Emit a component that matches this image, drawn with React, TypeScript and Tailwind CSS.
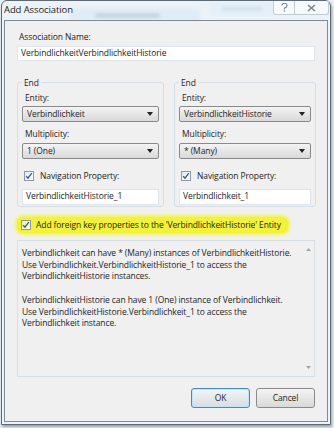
import { ReactNode } from "react";

const font = "font-['Segoe_UI','Open_Sans',sans-serif] tracking-[-0.1px]";

const Select = ({ value }: { value: string }) => (
  <div className="flex h-[16px] items-center justify-between rounded-[2px] border border-[#8a8a8a] bg-gradient-to-b from-[#f4f4f4] to-[#d9d9d9] pl-[4px] pr-[5px] text-[8.5px] text-[#1e1e1e]">
    <span>{value}</span>
    <svg width="6" height="4" viewBox="0 0 6 4">
      <path d="M0 0h6L3 4z" fill="#222" />
    </svg>
  </div>
);

const Check = ({ className = "" }: { className?: string }) => (
  <span
    className={`flex h-[10px] w-[10px] shrink-0 items-center justify-center border border-[#8e9aa8] bg-gradient-to-br from-[#e6e9ee] to-white ${className}`}
  >
    <svg width="8" height="8" viewBox="0 0 8 8">
      <path d="M1.2 4.2l1.8 2L6.8 1.2" fill="none" stroke="#3b5694" strokeWidth="1.3" />
    </svg>
  </span>
);

const TextBox = ({ value, className = "" }: { value: string; className?: string }) => (
  <div
    className={`flex h-[15px] items-center border border-[#dfe5ea] bg-white px-[3px] text-[8.5px] text-[#1e1e1e] ${className}`}
  >
    {value}
  </div>
);

const Label = ({ children }: { children: ReactNode }) => (
  <div className="pl-[3px] text-[8.5px] leading-[11px] text-[#1e1e1e]">{children}</div>
);

const EndGroup = ({ entity, mult, nav }: { entity: string; mult: string; nav: string }) => (
  <div className="relative flex h-[125px] flex-col rounded-[3px] border border-[#d5dfe5] px-[4px] pt-[9px]">
    <span className="absolute left-[4px] top-[-6px] bg-[#f0f0f0] px-[2px] text-[8.5px] leading-[11px] text-[#1e1e1e]">
      End
    </span>
    <Label>Entity:</Label>
    <div className="mt-[3px]">
      <Select value={entity} />
    </div>
    <div className="mt-[6px]">
      <Label>Multiplicity:</Label>
    </div>
    <div className="mt-[4px]">
      <Select value={mult} />
    </div>
    <div className="mt-[11px] flex items-center gap-[6px] pl-[2px] text-[8.5px] text-[#1e1e1e]">
      <Check />
      <span>Navigation Property:</span>
    </div>
    <div className="mt-[6px]">
      <TextBox value={nav} className="h-[16px]" />
    </div>
  </div>
);

export default function App() {
  return (
    <div className={`relative h-[428px] w-[334px] overflow-hidden bg-[#e9f2f8] ${font}`}>
      {/* blurred background stuff seen through the glass frame */}
      <div className="absolute left-[70px] top-[8px] h-[14px] w-[130px] rounded-[4px] bg-[#b9d9ee] opacity-70 blur-[2px]" />
      <div className="absolute left-[95px] top-[13px] h-[5px] w-[65px] rounded bg-[#6f8494] opacity-60 blur-[1.5px]" />
      <div className="absolute left-[210px] top-[2px] h-[14px] w-[64px] rounded-[3px] bg-[#cfe6f6] opacity-80 blur-[1px]" />
      <div className="absolute left-[222px] top-[7px] h-[4px] w-[40px] bg-[#8aa6ba] opacity-50 blur-[1.5px]" />

      <div className="relative ml-[1px] flex h-[425px] w-[330px] flex-col rounded-t-[6px] border border-[#5d6a76] bg-[#eef3f8]/60 shadow-[1px_2px_3px_rgba(0,0,0,0.35)]">
        {/* title bar */}
        <div className="flex h-[19px] items-start justify-between">
          <span className="pl-[2px] pt-[3px] text-[9.5px] leading-[12px] text-[#1b1b1b]">Add Association</span>
          <div className="mr-[1px] flex">
            <div className="flex h-[14px] w-[22px] items-center justify-center rounded-bl-[3px] border border-t-0 border-[#c3cbd3] bg-white/60">
              <svg width="7" height="9" viewBox="0 0 7 9">
                <path d="M1 2.5a2.5 2.2 0 1 1 3.2 2.1c-.6.3-.8.6-.8 1.3v.6" fill="none" stroke="#7b8591" strokeWidth="1.1" />
                <rect x="2.8" y="7.4" width="1.3" height="1.3" fill="#7b8591" />
              </svg>
            </div>
            <div className="flex h-[14px] w-[34px] items-center justify-center rounded-br-[3px] border border-l-0 border-t-0 border-[#c3cbd3] bg-white/60">
              <svg width="9" height="8" viewBox="0 0 9 8">
                <path d="M1 1l7 6M8 1L1 7" stroke="#7b8591" strokeWidth="1.6" />
              </svg>
            </div>
          </div>
        </div>

        {/* client area */}
        <div className="mx-[2px] mb-[2px] flex flex-1 flex-col border border-[#7f8b97] bg-[#f0f0f0] px-[12px] pt-[10px]">
          <div className="pl-[2px] text-[8.5px] leading-[11px] text-[#1e1e1e]">Association Name:</div>
          <TextBox value="VerbindlichkeitVerbindlichkeitHistorie" className="mt-[4px] border-[#c5d9ea]" />

          <div className="mt-[21px] grid grid-cols-[147px_142px] gap-[10px]">
            <EndGroup entity="Verbindlichkeit" mult="1 (One)" nav="VerbindlichkeitHistorie_1" />
            <EndGroup entity="VerbindlichkeitHistorie" mult="* (Many)" nav="Verbindlichkeit_1" />
          </div>

          <div className="mt-[10px] flex h-[16px] w-[271px] items-center gap-[5px] rounded-[6px] bg-[#f2f237] pl-[4px] text-[8.5px] text-[#1e1e1e] shadow-[0_0_3px_2px_#f4f45a]">
            <Check className="border-[#8a8f5e] from-[#eef08a] to-[#f6f78f]" />
            <span>Add foreign key properties to the 'VerbindlichkeitHistorie' Entity</span>
          </div>

          <div className="mt-[7px] flex h-[137px] border border-[#d5dfe5] bg-[#f0f0f0]">
            <div className="flex-1 whitespace-nowrap pl-[4px] pt-[6px] text-[8.5px] leading-[11.7px] text-[#1e1e1e]">
              <p>Verbindlichkeit can have * (Many) instances of VerbindlichkeitHistorie.</p>
              <p>Use Verbindlichkeit.VerbindlichkeitHistorie_1 to access the</p>
              <p>VerbindlichkeitHistorie instances.</p>
              <p className="mt-[11.7px]">VerbindlichkeitHistorie can have 1 (One) instance of Verbindlichkeit.</p>
              <p>Use VerbindlichkeitHistorie.Verbindlichkeit_1 to access the</p>
              <p>Verbindlichkeit instance.</p>
            </div>
            <div className="flex w-[12px] flex-col items-center justify-between py-[7px]">
              <svg width="5" height="3" viewBox="0 0 5 3">
                <path d="M0 3h5L2.5 0z" fill="#a4a4a4" />
              </svg>
              <svg width="5" height="3" viewBox="0 0 5 3">
                <path d="M0 0h5L2.5 3z" fill="#a4a4a4" />
              </svg>
            </div>
          </div>

          <div className="mt-[11px] flex justify-end gap-[6px]">
            <button className="flex h-[20px] w-[59px] items-center justify-center rounded-[3px] border border-[#3c8fc4] bg-gradient-to-b from-[#f3f5f7] to-[#d8dde2] text-[8.5px] text-[#1e1e1e] shadow-[inset_0_0_0_1px_#bfe3f7]">
              OK
            </button>
            <button className="flex h-[20px] w-[59px] items-center justify-center rounded-[3px] border border-[#8a8a8a] bg-gradient-to-b from-[#f4f4f4] to-[#d9d9d9] text-[8.5px] text-[#1e1e1e]">
              Cancel
            </button>
          </div>
        </div>
      </div>
    </div>
  );
}
